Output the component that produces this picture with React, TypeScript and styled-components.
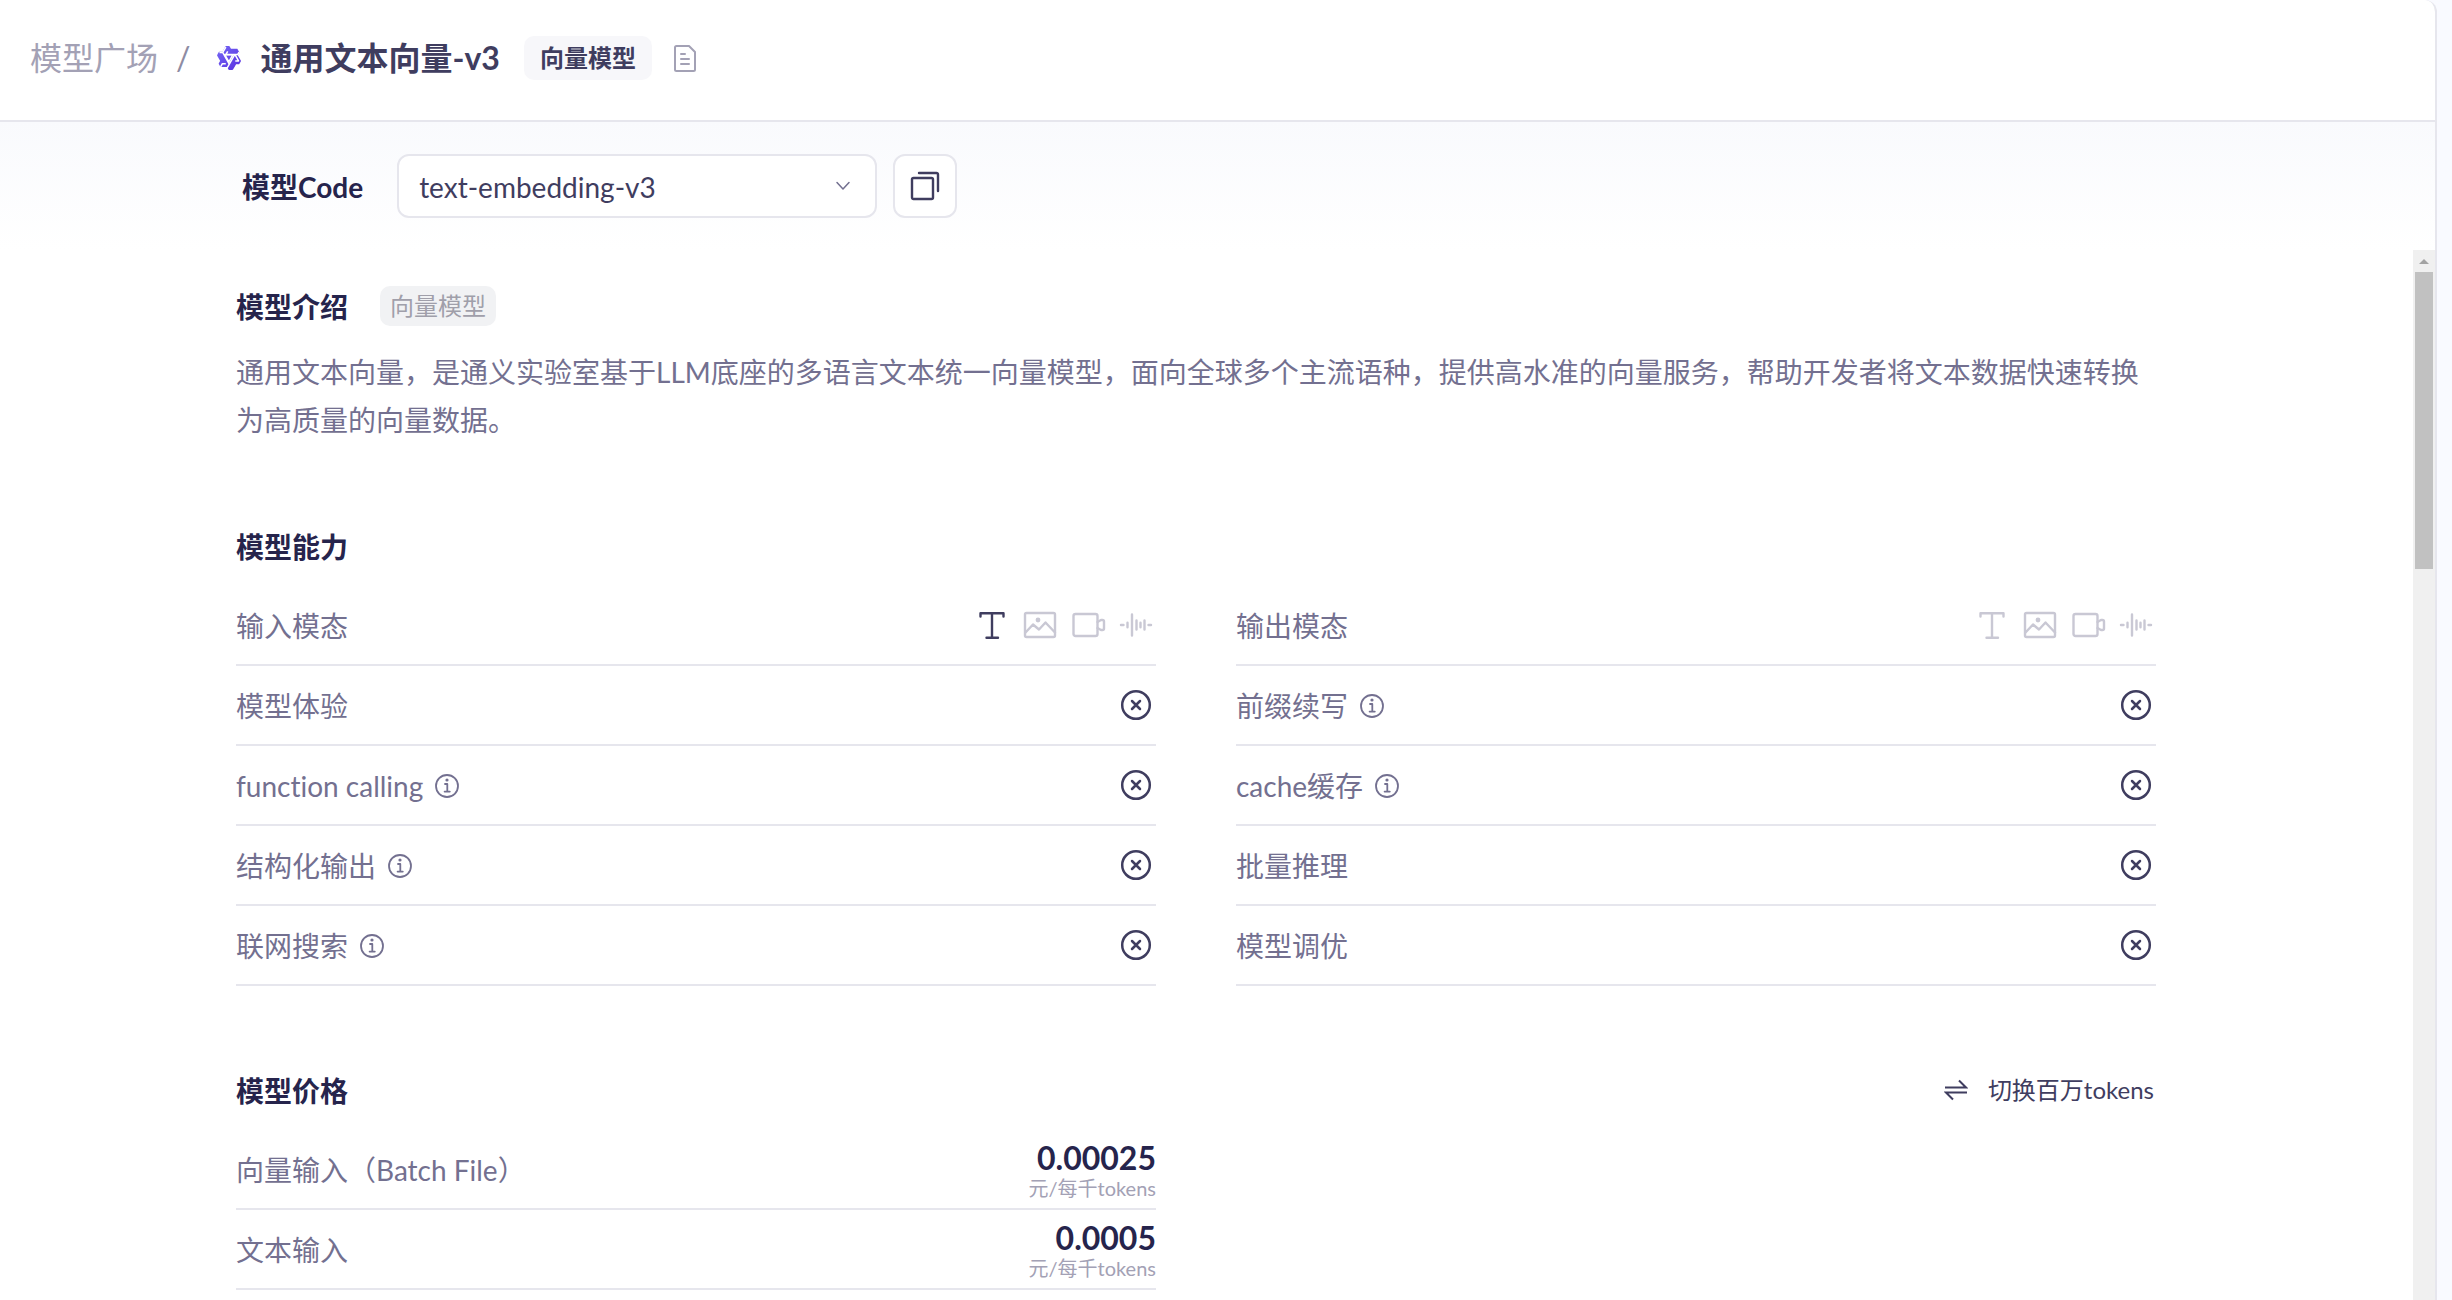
import React from "react";
import styled, { createGlobalStyle } from "styled-components";

const Global = createGlobalStyle`
  *, *::before, *::after { box-sizing: border-box; }
  html, body, #root { height: 100%; margin: 0; }
  body {
    overflow: hidden;
    background: #f9faff;
    color: #26244c;
    font-family: Lato, "Noto Sans CJK SC", sans-serif;
    font-size: 28px;
    line-height: 48px;
    font-variant-ligatures: none;
  }
  h1, h2, p, ul, dl, dd { margin: 0; padding: 0; }
`;

const Panel = styled.div`
  height: 100vh;
  margin-right: 15px;
  border-right: 2px solid #e6e6ed;
  border-top-right-radius: 12px;
  background: #fff;
  display: flex;
  flex-direction: column;
  overflow: hidden;
`;

const Header = styled.header`
  flex: none;
  display: flex;
  align-items: center;
  height: 122px;
  padding: 0 30px 4px;
  border-bottom: 2px solid #e6e6ed;
`;

const Crumb = styled.a`
  font-size: 32px;
  color: #a3a1b5;
  text-decoration: none;
`;

const Slash = styled.span`
  margin: 0 26px 0 18px;
  font-size: 32px;
  color: #8e8ca3;
`;

const Title = styled.h1`
  margin: 0 24px 0 18px;
  font-size: 32px;
  font-weight: 700;
  color: #3f3d5f;
`;

const Tag = styled.span<{ $small?: boolean }>`
  padding: ${(p) => (p.$small ? "0 10px" : "0 16px")};
  border-radius: 10px;
  font-size: 24px;
  line-height: ${(p) => (p.$small ? "40px" : "44px")};
  font-weight: ${(p) => (p.$small ? 400 : 700)};
  color: ${(p) => (p.$small ? "#a09faa" : "#3f3d5f")};
  background: ${(p) => (p.$small ? "#f1f2f4" : "#f7f7fa")};
`;

const IconButton = styled.button`
  display: grid;
  place-items: center;
  margin-left: 22px;
  padding: 0;
  border: 0;
  background: none;
  color: #a3a1b5;
`;

const CodeBar = styled.div`
  flex: none;
  display: flex;
  align-items: center;
  height: 128px;
  padding: 0 242px;
  background: linear-gradient(#f9fafd, #fff);
`;

const CodeLabel = styled.label`
  margin-right: 34px;
  padding-top: 2px;
  font-weight: 700;
`;

const SelectBox = styled.div`
  display: grid;
  align-items: center;
  width: 480px;
  height: 64px;
  & > * { grid-area: 1 / 1; }
  & > svg { justify-self: end; margin-right: 26px; pointer-events: none; }
`;

const Select = styled.select`
  appearance: none;
  width: 100%;
  height: 100%;
  padding: 2px 20px 0;
  border: 2px solid #e6e6ed;
  border-radius: 12px;
  background: #fff;
  color: #3f3d5f;
  font: inherit;
`;

const CopyButton = styled.button`
  display: grid;
  place-items: center;
  width: 64px;
  height: 64px;
  margin-left: 16px;
  padding: 0;
  border: 2px solid #e6e6ed;
  border-radius: 12px;
  background: #fff;
  color: #3f3d5f;
`;

const Body = styled.div`
  flex: 1;
  min-height: 0;
  display: flex;
`;

const Content = styled.main`
  flex: 1;
  min-width: 0;
  overflow: hidden;
  padding: 32px 257px 0 236px;
`;

const Section = styled.section`
  margin-bottom: 80px;
`;

const SectionHead = styled.div`
  display: flex;
  align-items: center;
  height: 48px;
`;

const SectionTitle = styled.h2`
  margin-right: 32px;
  padding-top: 2px;
  font-size: 28px;
  font-weight: 700;
`;

const Intro = styled.p`
  margin: 18px 0 -2px;
  color: #737090;
`;

const Grid = styled.dl`
  display: grid;
  grid-template-columns: 1fr 1fr;
  column-gap: 80px;
  margin-top: 16px;
`;

const Row = styled.div`
  display: flex;
  align-items: center;
  justify-content: space-between;
  height: 80px;
  border-bottom: 2px solid #e6e6ed;
`;

const Name = styled.dt`
  display: flex;
  align-items: center;
  gap: 12px;
  padding-top: 2px;
  color: #737090;
`;

const Value = styled.dd`
  display: flex;
  align-items: center;
  gap: 12px;
  padding-right: 2px;
  color: #3f3d5f;
`;

const Price = styled.dd`
  display: flex;
  flex-direction: column;
  align-items: flex-end;
  padding-top: 2px;
`;

const Amount = styled.strong`
  font-size: 32px;
  line-height: 36px;
`;

const Unit = styled.span`
  font-size: 20px;
  line-height: 24px;
  color: #a3a1b5;
`;

const Switch = styled.button`
  display: flex;
  align-items: center;
  gap: 20px;
  margin-left: auto;
  padding: 0 2px;
  border: 0;
  background: none;
  color: #3f3d5f;
  font: inherit;
  font-size: 24px;
`;

const Scrollbar = styled.div`
  flex: none;
  width: 22px;
  padding: 0 2px;
  background: #f0f0f0;
  & > svg { display: block; margin: 0 auto; }
`;

const Thumb = styled.div`
  height: 297px;
  background: #c1c1c1;
`;

const stroke = {
  fill: "none",
  stroke: "currentColor",
  strokeWidth: 2,
  strokeLinecap: "round",
  strokeLinejoin: "round",
} as const;

const Logo = () => (
  <svg width="26" height="26" viewBox="0 0 24 24" aria-hidden="true">
    <defs>
      <linearGradient id="logo" x1="0" x2="1" y1="0" y2="1">
        <stop offset="0" stopColor="#7468f5" />
        <stop offset="1" stopColor="#5a2fe0" />
      </linearGradient>
    </defs>
    <path
      fill="url(#logo)"
      d="M12.604 1.34c.393.69.784 1.382 1.174 2.075a.18.18 0 00.157.091h5.552c.174 0 .322.11.446.327l1.454 2.57c.19.337.24.478.024.837-.26.43-.513.864-.76 1.3l-.367.658c-.106.196-.223.28-.04.512l2.652 4.637c.172.301.111.494-.043.77-.437.785-.882 1.564-1.335 2.34-.159.272-.352.375-.68.37-.777-.016-1.552-.01-2.327.016a.099.099 0 00-.081.05 575.097 575.097 0 01-2.705 4.74c-.169.293-.38.363-.725.364-.997.003-2.002.004-3.017.002a.537.537 0 01-.465-.271l-1.335-2.323a.09.09 0 00-.083-.049H4.982c-.285.03-.553-.001-.805-.092l-1.603-2.77a.543.543 0 01-.002-.54l1.207-2.12a.198.198 0 000-.197 550.951 550.951 0 01-1.875-3.272l-.79-1.395c-.16-.31-.173-.496.095-.965.465-.813.927-1.625 1.387-2.436.132-.234.304-.334.584-.335a338.3 338.3 0 012.589-.001.124.124 0 00.107-.063l2.806-4.895a.488.488 0 01.422-.246c.524-.001 1.053 0 1.583-.006L11.704 1c.341-.003.724.032.9.34z"
    />
    <g fill="none" stroke="#fff" strokeWidth="1.4" strokeLinejoin="round">
      <path d="M3.200 6.900H6.200L12 17.100M9.100 1.900L6.200 6.900M8.100 8.700H20.100l1.200-2.100M10.800 5.800L9.200 8.700M17.400 8.700L11.500 19.100 10 21.600M17.400 8.700l3.400 6h-3M9 17.200H5.900l-1.700 3" />
      <path d="M8.100 8.900h7.500l-3.700 6.600z" />
    </g>
  </svg>
);

const DocIcon = () => (
  <svg width="22" height="27" viewBox="0 0 22 27" {...stroke} aria-hidden="true">
    <path d="M1 2.5A1.5 1.5 0 0 1 2.5 1H15l6 6v17.500a1.500 1.500 0 0 1-1.500 1.500h-17A1.500 1.500 0 0 1 1 24.500zM7 9h4M7 14h8M7 19h8" />
  </svg>
);

const ChevronIcon = () => (
  <svg width="16" height="10" viewBox="0 0 16 10" {...stroke} stroke="#737090" strokeWidth="1.500" aria-hidden="true">
    <path d="M2 1.500l6 6.500 6-6.500" />
  </svg>
);

const CopyIcon = () => (
  <svg width="30" height="30" viewBox="0 0 30 30" {...stroke} strokeWidth="2.400" aria-hidden="true">
    <rect x="2" y="7" width="21" height="21" rx="1.500" />
    <path d="M9 2h17.500a1.500 1.500 0 0 1 1.500 1.500V20" />
  </svg>
);

const InfoIcon = () => (
  <svg width="24" height="24" viewBox="0 0 24 24" {...stroke} strokeWidth="1.800" aria-hidden="true">
    <circle cx="12" cy="12" r="11" />
    <path d="M10 10h2.300v7.500M9.600 17.600h5.200" strokeWidth="1.800" />
    <circle cx="12" cy="6" r="1.600" fill="currentColor" stroke="none" />
  </svg>
);

const CrossIcon = () => (
  <svg width="36" height="36" viewBox="0 0 36 36" {...stroke} strokeWidth="2.500" aria-label="不支持">
    <circle cx="18" cy="18" r="13.800" />
    <path d="M14 14l8 8M22 14l-8 8" />
  </svg>
);

const ModeIcon = styled.svg<{ $active?: boolean }>`
  color: ${(p) => (p.$active ? "#3f3d5f" : "#c9c8d4")};
`;

const modeBox = { width: 36, height: 36, viewBox: "0 0 36 36", ...stroke, strokeWidth: 2.4 };

const Modes = ({ text }: { text?: boolean }) => (
  <Value>
    <ModeIcon {...modeBox} $active={text} aria-label="文本">
      <path d="M6.500 9.500V6.200h23v3.300M18 6.200v24.600M12.500 30.800h11.500" />
    </ModeIcon>
    <ModeIcon {...modeBox} aria-label="图片">
      <rect x="3" y="6" width="30" height="24" rx="1.500" />
      <path d="M3.500 25.500l7.500-8 6 5 6.500-7 9.500 10" />
      <circle cx="16" cy="13" r="2.400" fill="currentColor" stroke="none" />
    </ModeIcon>
    <ModeIcon {...modeBox} aria-label="视频">
      <rect x="3.500" y="7" width="24" height="22" rx="2" />
      <path d="M27.500 15l3.500-2h1.500c1 0 1.500.7 1.500 1.500v7c0 1-.5 1.500-1.500 1.500h-1.500l-3.500-2" />
    </ModeIcon>
    <ModeIcon {...modeBox} aria-label="音频">
      <path d="M3 18h2.500M9.500 15.800v4.400M14 7.500v21M18.500 13.500v9M22.500 15.800v4.400M26.500 13.500v9M30.500 18H33" />
    </ModeIcon>
  </Value>
);

const SwapIcon = () => (
  <svg width="24" height="24" viewBox="0 0 24 24" {...stroke} strokeLinecap="butt" strokeLinejoin="miter" aria-hidden="true">
    <path d="M1 9.500h21L15 2.500M23 14.500H2l7 7" />
  </svg>
);

type Feature = { name: string; info?: boolean; modes?: "text" | "none" };

const features: Feature[] = [
  { name: "输入模态", modes: "text" },
  { name: "输出模态", modes: "none" },
  { name: "模型体验" },
  { name: "前缀续写", info: true },
  { name: "function calling", info: true },
  { name: "cache缓存", info: true },
  { name: "结构化输出", info: true },
  { name: "批量推理" },
  { name: "联网搜索", info: true },
  { name: "模型调优" },
];

const prices = [
  { name: "向量输入（Batch File）", amount: "0.00025" },
  { name: "文本输入", amount: "0.0005" },
];

const PriceRow = styled(Row)`
  grid-column: 1;
`;

export default function App() {
  return (
    <>
      <Global />
      <Panel>
        <Header>
          <Crumb href="#">模型广场</Crumb>
          <Slash>/</Slash>
          <Logo />
          <Title>通用文本向量-v3</Title>
          <Tag>向量模型</Tag>
          <IconButton aria-label="文档">
            <DocIcon />
          </IconButton>
        </Header>
        <CodeBar>
          <CodeLabel htmlFor="code">模型Code</CodeLabel>
          <SelectBox>
            <Select id="code" defaultValue="text-embedding-v3">
              <option>text-embedding-v3</option>
            </Select>
            <ChevronIcon />
          </SelectBox>
          <CopyButton aria-label="复制">
            <CopyIcon />
          </CopyButton>
        </CodeBar>
        <Body>
          <Content>
            <Section>
              <SectionHead>
                <SectionTitle>模型介绍</SectionTitle>
                <Tag $small>向量模型</Tag>
              </SectionHead>
              <Intro>
                通用文本向量，是通义实验室基于LLM底座的多语言文本统一向量模型，面向全球多个主流语种，提供高水准的向量服务，帮助开发者将文本数据快速转换为高质量的向量数据。
              </Intro>
            </Section>
            <Section>
              <SectionHead>
                <SectionTitle>模型能力</SectionTitle>
              </SectionHead>
              <Grid>
                {features.map((f) => (
                  <Row key={f.name}>
                    <Name>
                      {f.name}
                      {f.info && <InfoIcon />}
                    </Name>
                    {f.modes ? (
                      <Modes text={f.modes === "text"} />
                    ) : (
                      <Value>
                        <CrossIcon />
                      </Value>
                    )}
                  </Row>
                ))}
              </Grid>
            </Section>
            <Section>
              <SectionHead>
                <SectionTitle>模型价格</SectionTitle>
                <Switch>
                  <SwapIcon />
                  切换百万tokens
                </Switch>
              </SectionHead>
              <Grid>
                {prices.map((p) => (
                  <PriceRow key={p.name}>
                    <Name>{p.name}</Name>
                    <Price>
                      <Amount>{p.amount}</Amount>
                      <Unit>元/每千tokens</Unit>
                    </Price>
                  </PriceRow>
                ))}
              </Grid>
            </Section>
          </Content>
          <Scrollbar aria-hidden="true">
            <svg width="18" height="22" viewBox="0 0 18 22">
              <path d="M4 14h10L9 9z" fill="#a3a3a3" />
            </svg>
            <Thumb />
          </Scrollbar>
        </Body>
      </Panel>
    </>
  );
}
